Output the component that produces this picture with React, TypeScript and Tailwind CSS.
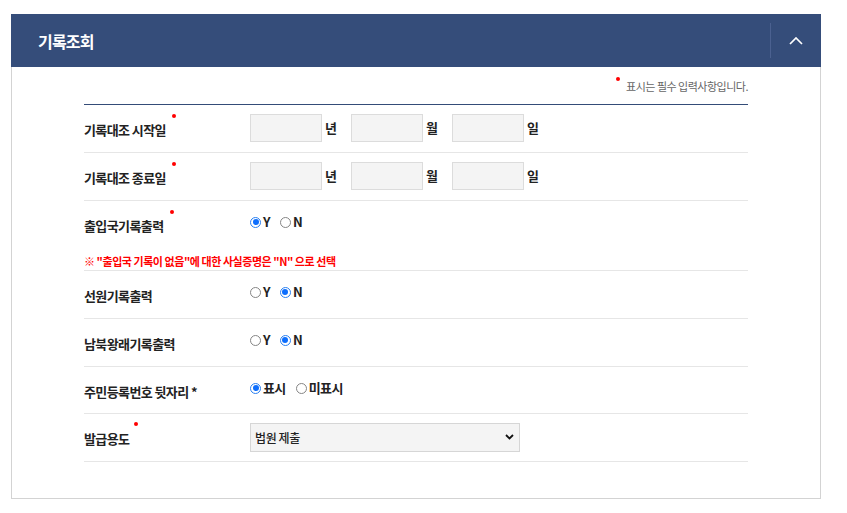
import React from "react";

const FONT = { fontFamily: '"Noto Sans CJK KR", "Noto Sans", sans-serif' };

function Dot({ cls }: { cls: string }) {
  return <span className={"inline-block w-[4px] h-[4px] rounded-full bg-[#ff0000] " + cls} />;
}

function Label({ text, dot, dotCls }: { text: string; dot?: boolean; dotCls?: string }) {
  return (
    <div className="w-[166px] shrink-0 self-start flex items-start pt-[15px]">
      <span className="text-[13px] leading-[20px] font-bold tracking-[-0.6px] text-[#222]">{text}</span>
      {dot && <Dot cls={dotCls ?? "ml-[6px] mt-[-6px]"} />}
    </div>
  );
}

function Radio({ checked, label }: { checked?: boolean; label: string }) {
  return (
    <span className="flex items-center">
      {checked ? (
        <span className="w-[11px] h-[11px] rounded-full border border-[#2a7ff0] p-[1.5px] flex bg-white">
          <span className="w-full h-full rounded-full bg-[#0d6efd]" />
        </span>
      ) : (
        <span className="w-[11px] h-[11px] rounded-full border border-[#858585] bg-white" />
      )}
      <span className="ml-[2px] text-[13px] leading-[20px] font-bold tracking-[-0.6px] text-[#222]">{label}</span>
    </span>
  );
}

function RadioGroup({ items, sel }: { items: string[]; sel: number }) {
  return (
    <div className="self-start pt-[11px] flex items-center gap-[10px]">
      {items.map((t, i) => (
        <Radio key={t} label={t} checked={i === sel} />
      ))}
    </div>
  );
}

function DateInputs() {
  const units = ["년", "월", "일"];
  return (
    <div className="self-start pt-[9px] flex items-center">
      {units.map((u) => (
        <div key={u} className="flex items-center">
          <div className="w-[72px] h-[28px] bg-[#f4f4f4] border border-[#dcdcdc]" />
          <span className="w-[29px] pl-[3px] text-[13px] font-bold text-[#222]">{u}</span>
        </div>
      ))}
    </div>
  );
}

export default function App() {
  return (
    <div className="pt-[14px] pl-[11px] bg-white min-h-[513px]" style={FONT}>
      <div className="w-[810px]">
        <div className="h-[53px] bg-[#354d7a] flex items-center pl-[27px]">
          <span className="text-[16px] font-bold tracking-[-0.8px] text-white">기록조회</span>
          <div className="ml-auto w-px h-[35px] bg-[#4b6190]" />
          <div className="w-[50px] flex justify-center">
            <svg width="14" height="8" viewBox="0 0 14 8" fill="none">
              <polyline points="1,7 7,1 13,7" stroke="#ffffff" strokeWidth="1.7" />
            </svg>
          </div>
        </div>
        <div className="border border-t-0 border-[#d3d3d3] px-[72px] pb-[36px]">
          <div className="pt-[10px] pb-[10px] border-b border-[#344c78] flex justify-end items-start">
            <Dot cls="mr-[6px]" />
            <span className="mt-[1px] text-[11px] leading-[16px] tracking-[-0.5px] text-[#666]">
              표시는 필수 입력사항입니다.
            </span>
          </div>

          <div className="h-[48px] flex border-b border-[#e6e6e6]">
            <Label text="기록대조 시작일" dot />
            <DateInputs />
          </div>
          <div className="h-[48px] flex border-b border-[#e6e6e6]">
            <Label text="기록대조 종료일" dot />
            <DateInputs />
          </div>
          <div className="border-b border-[#e6e6e6] pb-[1px]">
            <div className="flex">
              <Label text="출입국기록출력" dot />
              <RadioGroup items={["Y", "N"]} sel={0} />
            </div>
            <div className="mt-[17px] text-[11px] leading-[16px] font-bold tracking-[-0.45px] text-[#ff0000]">
              ※ "출입국 기록이 없음"에 대한 사실증명은 "N" 으로 선택
            </div>
          </div>
          <div className="h-[48px] flex border-b border-[#e6e6e6]">
            <Label text="선원기록출력" />
            <RadioGroup items={["Y", "N"]} sel={1} />
          </div>
          <div className="h-[48px] flex border-b border-[#e6e6e6]">
            <Label text="남북왕래기록출력" />
            <RadioGroup items={["Y", "N"]} sel={1} />
          </div>
          <div className="h-[47px] flex border-b border-[#e6e6e6]">
            <Label text="주민등록번호 뒷자리 *" />
            <RadioGroup items={["표시", "미표시"]} sel={0} />
          </div>
          <div className="h-[48px] flex border-b border-[#e6e6e6]">
            <Label text="발급용도" dot dotCls="ml-[5px] mt-[-7px]" />
            <div className="self-start pt-[9px]">
              <div className="relative w-[270px] h-[29px]">
                <select
                  defaultValue="court"
                  className="appearance-none w-full h-full bg-[#f4f4f4] border border-[#d6d6d6] pl-[4px] text-[12px] font-medium tracking-[-0.4px] text-[#222] outline-none"
                  style={FONT}
                >
                  <option value="court">법원 제출</option>
                </select>
                <svg
                  className="absolute right-[6px] top-[11px] pointer-events-none"
                  width="9"
                  height="6"
                  viewBox="0 0 9 6"
                  fill="none"
                >
                  <polyline points="1,1 4.5,4.5 8,1" stroke="#111" strokeWidth="1.8" />
                </svg>
              </div>
            </div>
          </div>
        </div>
      </div>
    </div>
  );
}
